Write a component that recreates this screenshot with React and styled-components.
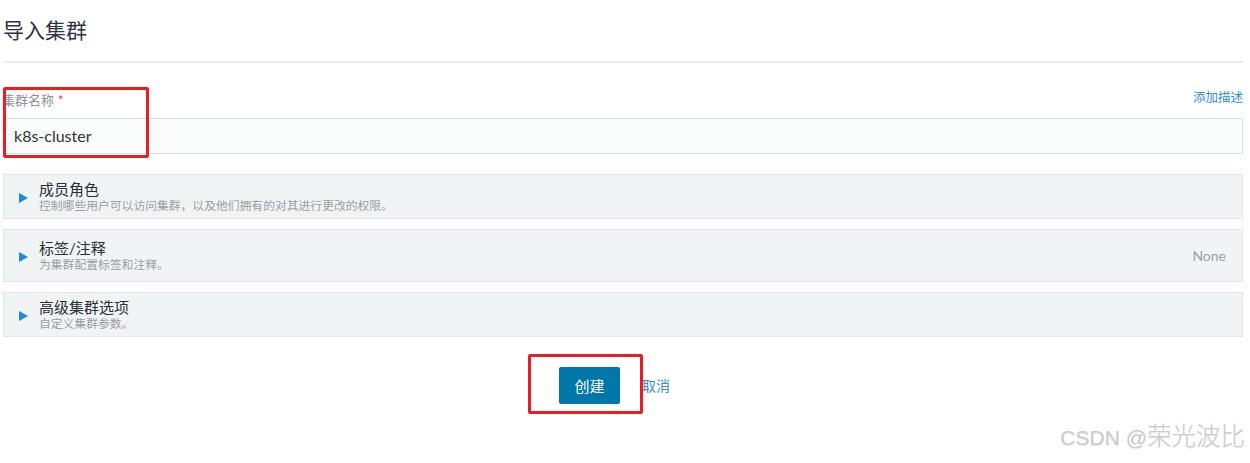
import React from "react";
import styled, { createGlobalStyle } from "styled-components";

const Global = createGlobalStyle`
  html, body { margin: 0; padding: 0; background: #fff; }
  body { font-family: Lato, "Noto Sans CJK SC", sans-serif; color: #333; }
`;

const Page = styled.div`
  position: relative;
  width: 1250px;
  height: 463px;
  overflow: hidden;
  padding: 0 7px 0 3px;
  box-sizing: border-box;
`;

const Title = styled.h1`
  margin: 0;
  padding-top: 16px;
  height: 44px;
  box-sizing: border-box;
  font-size: 21px;
  font-weight: 400;
  line-height: 28px;
  color: #2d3540;
`;

const Divider = styled.div`
  height: 2px;
  background: #e9ecee;
  margin-top: 17px;
`;

const LabelRow = styled.div`
  display: flex;
  justify-content: space-between;
  align-items: flex-start;
  margin-top: 28px;
  height: 19px;
`;

const Label = styled.span`
  font-size: 13px;
  color: #8d9299;
  line-height: 19px;
  margin-left: -1px;
`;

const Star = styled.span`
  color: #e03c3c;
  margin-left: 4px;
`;

const Link = styled.a`
  color: ${(p) => p.$color || "#2f8fd0"};
  font-size: ${(p) => p.$size || 12.5}px;
  line-height: ${(p) => p.$lh || 14}px;
  text-decoration: none;
  cursor: pointer;
`;

const Input = styled.div`
  margin-top: 8px;
  height: 36px;
  box-sizing: border-box;
  border: 1px solid #dde1e4;
  background: #fafbfb;
  font-size: 16px;
  line-height: 33px;
  padding-left: 10px;
  color: #333;
`;

const Sections = styled.div`
  margin-top: 20px;
  display: flex;
  flex-direction: column;
  gap: 10px;
`;

const Accordion = styled.div`
  display: flex;
  align-items: center;
  background: #f1f4f5;
  border: 1px solid #e1e5e7;
  height: ${(p) => p.$h}px;
  box-sizing: border-box;
  padding: 0 16px 0 15px;
`;

const Arrow = styled.span`
  width: 0;
  height: 0;
  border-top: 5px solid transparent;
  border-bottom: 5px solid transparent;
  border-left: 9px solid #2389d6;
  margin-top: 3px;
  margin-right: 11px;
`;

const AccText = styled.div`
  display: flex;
  flex-direction: column;
  flex: 1;
`;

const AccTitle = styled.div`
  font-size: 15px;
  line-height: 18px;
  color: #2a2f36;
`;

const AccSub = styled.div`
  font-size: 11.8px;
  line-height: 15px;
  color: #9a9ea3;
`;

const AccRight = styled.div`
  font-size: 14px;
  color: #9a9ea3;
`;

const Actions = styled.div`
  display: flex;
  align-items: center;
  margin-top: 30px;
  padding-left: 556px;
  gap: 22px;
`;

const Primary = styled.button`
  width: 61px;
  height: 37px;
  border: none;
  border-radius: 2px;
  background: #0076a9;
  color: #fff;
  font-size: 15px;
  font-family: inherit;
  padding: 0;
`;

const Highlight = styled.div`
  position: absolute;
  left: ${(p) => p.$x}px;
  top: ${(p) => p.$y}px;
  width: ${(p) => p.$w}px;
  height: ${(p) => p.$h}px;
  border: 3px solid #ec1c24;
  border-radius: 2px;
  box-sizing: border-box;
  pointer-events: none;
`;

const Watermark = styled.div`
  position: absolute;
  right: 5px;
  top: 420px;
  line-height: 30px;
  font-family: "Liberation Sans", "Noto Sans CJK SC", sans-serif;
  font-size: 21px;
  color: #cbcbcb;
  text-shadow: 0 1px 1px #e6e6e6;
  white-space: nowrap;
`;

const WatermarkCjk = styled.span`
  font-family: "Noto Sans CJK SC", sans-serif;
  font-size: 24.5px;
  font-weight: 300;
`;

const sections = [
  { t: "成员角色", s: "控制哪些用户可以访问集群，以及他们拥有的对其进行更改的权限。", h: 45 },
  { t: "标签/注释", s: "为集群配置标签和注释。", h: 53, right: "None" },
  { t: "高级集群选项", s: "自定义集群参数。", h: 45 },
];

export default function App() {
  return (
    <>
      <Global />
      <Page>
        <Title>导入集群</Title>
        <Divider />
        <LabelRow>
          <Label>
            集群名称<Star>*</Star>
          </Label>
          <Link>添加描述</Link>
        </LabelRow>
        <Input>k8s-cluster</Input>
        <Sections>
          {sections.map((x) => (
            <Accordion key={x.t} $h={x.h}>
              <Arrow />
              <AccText>
                <AccTitle>{x.t}</AccTitle>
                <AccSub>{x.s}</AccSub>
              </AccText>
              {x.right && <AccRight>{x.right}</AccRight>}
            </Accordion>
          ))}
        </Sections>
        <Actions>
          <Primary>创建</Primary>
          <Link $size={14} $lh={20}>取消</Link>
        </Actions>
        <Highlight $x={3} $y={87} $w={146} $h={71} />
        <Highlight $x={528} $y={354} $w={115} $h={60} />
        <Watermark>
          CSDN @<WatermarkCjk>荣光波比</WatermarkCjk>
        </Watermark>
      </Page>
    </>
  );
}
